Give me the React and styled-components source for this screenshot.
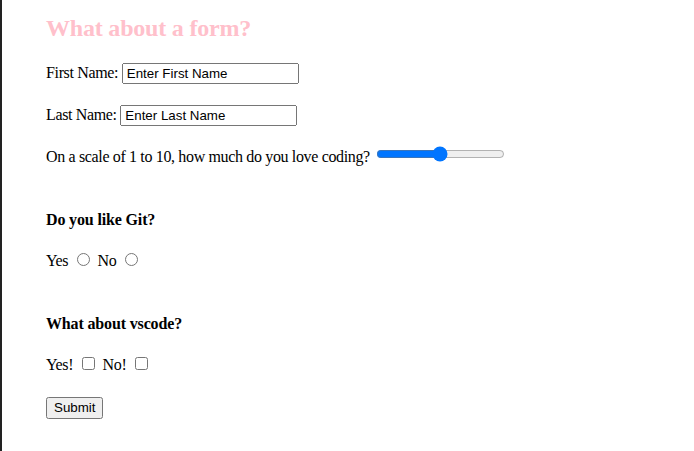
import styled, { createGlobalStyle } from 'styled-components';

const GlobalStyle = createGlobalStyle`
  body {
    margin: 0;
    font-family: "Liberation Serif", "Times New Roman", serif;
    font-size: 16px;
    letter-spacing: -0.35px;
    color: #000;
    background: #fff;
  }
  input, button {
    font-family: "Liberation Sans", Arial, sans-serif;
    font-size: 13.333px;
    letter-spacing: normal;
  }
`;

const Page = styled.div`
  min-height: 451px;
  box-sizing: border-box;
  border-left: 2px solid #222;
  padding: 1px 0 1px 44px;
`;

const Title = styled.h2`
  color: pink;
  font-size: 24px;
  letter-spacing: -0.2px;
  line-height: 28px;
  margin: 13px 0 18px;
`;

const Row = styled.p`
  margin: 16px 0;
  line-height: 26px;
`;

const Question = styled.h4`
  margin: 41px 0 19px;
  font-size: 16px;
  letter-spacing: -0.15px;
  line-height: 18px;
`;

const TextInput = styled.input`
  box-sizing: border-box;
  width: 177px;
  height: 21px;
  padding: 1px 3px;
  color: #000;
`;

const Choice = styled.input`
  width: 13px;
  height: 13px;
  margin: 3px 4px 0 5px;
`;

const Submit = styled.button`
  height: 22px;
  padding: 1px 6px;
`;

function App() {
  return (
    <>
      <GlobalStyle />
      <Page>
        <Title>What about a form?</Title>
        <form onSubmit={e => e.preventDefault()}>
          <Row>
            First Name: <TextInput type="text" defaultValue="Enter First Name" />
          </Row>
          <Row>
            Last Name: <TextInput type="text" defaultValue="Enter Last Name" />
          </Row>
          <Row>
            On a scale of 1 to 10, how much do you love coding? <input type="range" />
          </Row>
          <Question>Do you like Git?</Question>
          <Row>
            Yes <Choice type="radio" name="git" /> No <Choice type="radio" name="git" />
          </Row>
          <Question>What about vscode?</Question>
          <Row>
            Yes! <Choice type="checkbox" /> No! <Choice type="checkbox" />
          </Row>
          <Row>
            <Submit type="submit">Submit</Submit>
          </Row>
        </form>
      </Page>
    </>
  );
}

export default App;
